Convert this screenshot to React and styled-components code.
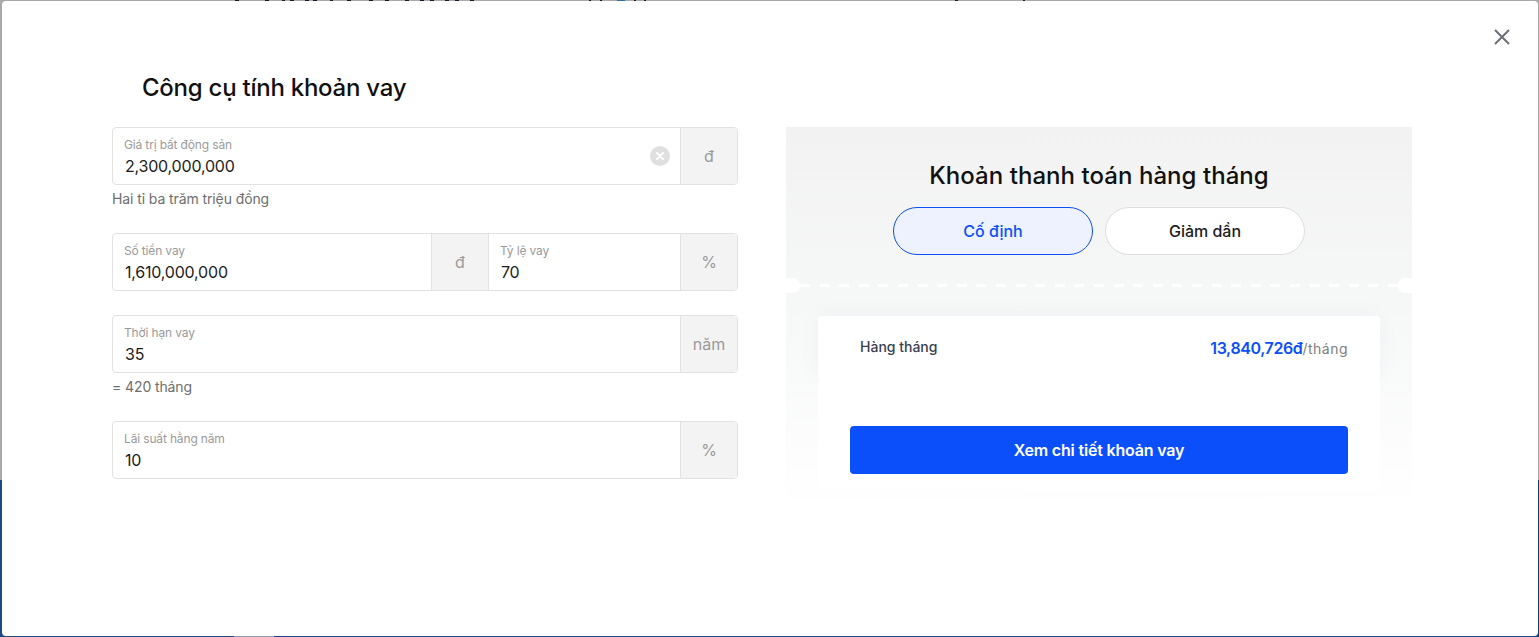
import React, { useState } from 'react';
import styled, { createGlobalStyle } from 'styled-components';

const GlobalStyle = createGlobalStyle`
  html, body {
    margin: 0;
    padding: 0;
    height: 100%;
    overflow: hidden;
  }
  body {
    background:
      linear-gradient(#0a3c7e, #0a3c7e) right bottom / 1px 157px no-repeat,
      linear-gradient(#8d9bac, #8d9bac) 234px bottom / 40px 1px no-repeat,
      linear-gradient(#a9a9a9 0, #a9a9a9 480px, #1d4a7e 480px);
    font-family: Inter, "Noto Sans", sans-serif;
    color: #111;
  }
  * {
    box-sizing: border-box;
  }
`;

// bottoms of the page text that peek out above the modal
const peekMarks = [
  [235, 4], [265, 4], [282, 3], [290, 4], [305, 4], [313, 4], [330, 3], [347, 4],
  [369, 4], [385, 4], [405, 4], [420, 4], [430, 4], [445, 4], [455, 4], [470, 4],
  [589, 2], [600, 2], [617, 8, '#2f6ca8'], [634, 2], [644, 2], [955, 3], [1023, 2],
];

const PeekStrip = styled.svg`
  position: absolute;
  top: 0;
  left: 0;
`;

const Modal = styled.div`
  position: relative;
  height: 635px;
  margin: 1px 1px 1px 2px;
  padding: 69px 110px 0;
  background: #fff;
  border-radius: 4px;
`;

const CloseButton = styled.button`
  position: absolute;
  top: 26px;
  right: 26px;
  width: 20px;
  height: 20px;
  padding: 0;
  border: none;
  background: none;
  color: #6b6f76;
  cursor: pointer;
`;

const Title = styled.h2`
  margin: 0 0 21px 30px;
  height: 36px;
  font-size: 24px;
  line-height: 36px;
  font-weight: 450;
  letter-spacing: -0.25px;
  color: #111;
`;

const Columns = styled.div`
  display: grid;
  grid-template-columns: 626px 626px;
  gap: 48px;
  align-items: start;
`;

const Form = styled.div`
  display: flex;
  flex-direction: column;
`;

const Group = styled.div`
  height: ${({ $hint }) => ($hint ? '106px' : '82px')};
`;

const FieldRow = styled.div`
  display: flex;
  height: 58px;
  border: 1px solid #e2e2e2;
  border-radius: 4px;
  overflow: hidden;
`;

const Field = styled.label`
  flex: ${({ $narrow }) => ($narrow ? '0 0 191px' : '1')};
  min-width: 0;
  display: flex;
  flex-direction: column;
  padding: 10px 11px 0;
`;

const FieldLabel = styled.span`
  height: 14px;
  font-size: 12px;
  line-height: 14px;
  letter-spacing: -0.15px;
  color: #9a9a9a;
`;

const FieldInput = styled.input`
  width: 100%;
  height: 20px;
  margin-top: 4px;
  padding: 0 1px;
  border: none;
  outline: none;
  background: none;
  font-family: inherit;
  font-size: 16px;
  line-height: 20px;
  letter-spacing: -0.2px;
  color: #1c1c1c;
`;

const Addon = styled.span`
  flex: none;
  width: ${({ $mid }) => ($mid ? '58px' : '57px')};
  display: flex;
  align-items: center;
  justify-content: center;
  background: #f3f3f3;
  border-left: 1px solid #e2e2e2;
  ${({ $mid }) => $mid && 'border-right: 1px solid #e2e2e2;'}
  font-size: 16px;
  color: #9a9a9a;
`;

const ClearWrap = styled.span`
  flex: none;
  width: 30px;
  display: flex;
  align-items: center;
  color: #dfdfdf;
`;

const Hint = styled.p`
  margin: 5px 0 0;
  font-size: 14px;
  line-height: 18px;
  letter-spacing: -0.1px;
  color: #6e6e6e;
`;

const Panel = styled.section`
  height: 384px;
  padding-top: 32px;
  background: linear-gradient(#f2f2f2 0, #f6f7f7 45%, #fff 100%);
`;

const PanelTitle = styled.h3`
  margin: 0;
  height: 34px;
  font-size: 24px;
  line-height: 34px;
  font-weight: 450;
  letter-spacing: 0.05px;
  text-align: center;
  color: #111;
`;

const Toggle = styled.div`
  display: flex;
  justify-content: center;
  gap: 12px;
  margin-top: 14px;
`;

const ToggleButton = styled.button`
  width: 200px;
  height: 48px;
  border-radius: 24px;
  border: 1px solid ${({ $active }) => ($active ? '#0b4ffa' : '#dedede')};
  background: ${({ $active }) => ($active ? '#edf2fe' : '#fff')};
  color: ${({ $active }) => ($active ? '#0b4ffa' : '#1c1c1c')};
  font-family: inherit;
  font-size: 16px;
  font-weight: 450;
  cursor: pointer;
`;

const Divider = styled.div`
  position: relative;
  height: 3px;
  margin-top: 29px;
  background: repeating-linear-gradient(90deg, #fff -5.6px, #fff 4.4px, transparent 4.4px, transparent 14px);

  &::before,
  &::after {
    content: '';
    position: absolute;
    top: -6px;
    width: 14px;
    height: 15px;
    background: #fff;
  }
  &::before {
    left: 0;
    border-radius: 0 7px 7px 0;
  }
  &::after {
    right: 0;
    border-radius: 7px 0 0 7px;
  }
`;

const Card = styled.div`
  margin: 29px 32px 0;
`;

const CardRow = styled.div`
  display: flex;
  justify-content: space-between;
  align-items: center;
  height: 64px;
  padding: 0 32px 0 42px;
  background: #fff;
  border-radius: 4px;
  box-shadow: 0 0 24px rgba(40, 50, 90, 0.04);
`;

const RowLabel = styled.span`
  margin-bottom: 3px;
  font-size: 14px;
  font-weight: 450;
  color: #3a4050;
`;

const RowValue = styled.span`
  font-size: 14px;
  letter-spacing: 0.5px;
  color: #7d7d7d;

  b {
    font-size: 16px;
    font-weight: 600;
    letter-spacing: -0.4px;
    color: #0b4ffa;
  }
`;

const CardFooter = styled.div`
  position: relative;
  height: 110px;
  padding: 46px 32px 0;
  background: #fff;
`;

const DetailButton = styled.button`
  display: block;
  width: 100%;
  height: 48px;
  border: none;
  border-radius: 4px;
  background: #0b4ffa;
  color: #fff;
  font-family: inherit;
  font-size: 16px;
  font-weight: 600;
  letter-spacing: -0.18px;
  cursor: pointer;
`;

const ClearIcon = () => (
  <svg width="20" height="20" viewBox="0 0 20 20">
    <circle cx="10" cy="10" r="10" fill="currentColor" />
    <path d="M7 7l6 6M13 7l-6 6" stroke="#fff" strokeWidth="2" strokeLinecap="round" />
  </svg>
);

const App = () => {
  const [mode, setMode] = useState('fixed');

  return (
    <>
      <GlobalStyle />
      <PeekStrip width="1539" height="1" aria-hidden="true">
        {peekMarks.map(([x, w, color]) => (
          <rect key={x} x={x} y="0" width={w} height="1" fill={color || '#1a1a2e'} />
        ))}
      </PeekStrip>
      <Modal>
        <CloseButton aria-label="Đóng">
          <svg width="20" height="20" viewBox="0 0 20 20">
            <path d="M3 3l14 14M17 3L3 17" stroke="currentColor" strokeWidth="2" />
          </svg>
        </CloseButton>
        <Title>Công cụ tính khoản vay</Title>
        <Columns>
          <Form>
            <Group $hint>
              <FieldRow>
                <Field>
                  <FieldLabel>Giá trị bất động sản</FieldLabel>
                  <FieldInput defaultValue="2,300,000,000" />
                </Field>
                <ClearWrap><ClearIcon /></ClearWrap>
                <Addon>đ</Addon>
              </FieldRow>
              <Hint>Hai tỉ ba trăm triệu đồng</Hint>
            </Group>
            <Group>
              <FieldRow>
                <Field>
                  <FieldLabel>Số tiền vay</FieldLabel>
                  <FieldInput defaultValue="1,610,000,000" />
                </Field>
                <Addon $mid>đ</Addon>
                <Field $narrow>
                  <FieldLabel>Tỷ lệ vay</FieldLabel>
                  <FieldInput defaultValue="70" />
                </Field>
                <Addon>%</Addon>
              </FieldRow>
            </Group>
            <Group $hint>
              <FieldRow>
                <Field>
                  <FieldLabel>Thời hạn vay</FieldLabel>
                  <FieldInput defaultValue="35" />
                </Field>
                <Addon>năm</Addon>
              </FieldRow>
              <Hint>= 420 tháng</Hint>
            </Group>
            <Group>
              <FieldRow>
                <Field>
                  <FieldLabel>Lãi suất hằng năm</FieldLabel>
                  <FieldInput defaultValue="10" />
                </Field>
                <Addon>%</Addon>
              </FieldRow>
            </Group>
          </Form>
          <Panel>
            <PanelTitle>Khoản thanh toán hàng tháng</PanelTitle>
            <Toggle>
              <ToggleButton $active={mode === 'fixed'} onClick={() => setMode('fixed')}>Cố định</ToggleButton>
              <ToggleButton $active={mode === 'down'} onClick={() => setMode('down')}>Giảm dần</ToggleButton>
            </Toggle>
            <Divider />
            <Card>
              <CardRow>
                <RowLabel>Hàng tháng</RowLabel>
                <RowValue><b>13,840,726đ</b>/tháng</RowValue>
              </CardRow>
              <CardFooter>
                <DetailButton>Xem chi tiết khoản vay</DetailButton>
              </CardFooter>
            </Card>
          </Panel>
        </Columns>
      </Modal>
    </>
  );
};

export default App;
